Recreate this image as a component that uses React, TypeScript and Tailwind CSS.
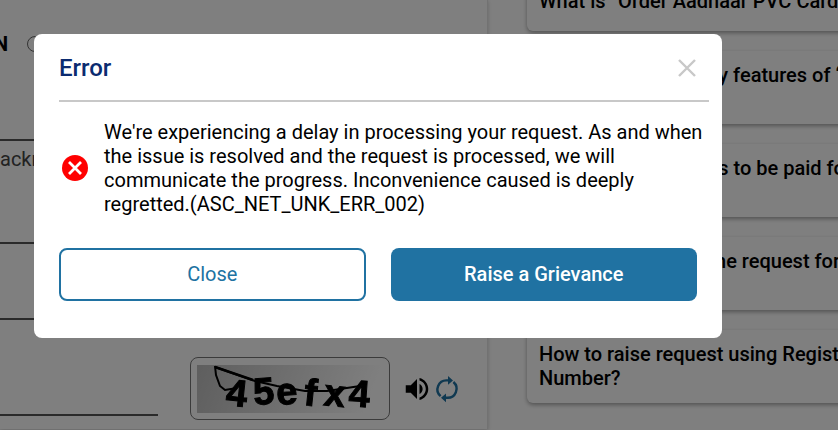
const faqs = [
  "What are the security features of “Aadhaar PVC Card”?",
  "What are the charges to be paid for “Order Aadhaar PVC Card”?",
  "How can one raise the request for “Aadhaar PVC Card”?",
  "How to raise request using Registered Mobile Number?",
];

function FaqList() {
  return (
    <aside className="ml-[39px] flex w-[460px] shrink-0 flex-col gap-5 text-xl leading-6 font-medium text-black">
      <button className="-mt-[11px] rounded-b-md bg-white px-3 pb-[18px] text-left shadow-[0_2px_4px_rgba(0,0,0,0.35)]">
        What is “Order Aadhaar PVC Card” service?
      </button>
      {faqs.map((question) => (
        <button
          key={question}
          className="h-[73px] rounded-md bg-white px-3 pb-0.5 text-left shadow-[0_2px_4px_rgba(0,0,0,0.35)]"
        >
          {question}
        </button>
      ))}
    </aside>
  );
}

function Captcha() {
  return (
    <div className="flex h-[63px] w-[200px] items-center justify-center rounded-lg border border-[#777]">
      <svg width="186" height="48" viewBox="0 0 186 48" role="img" aria-label="Captcha">
        <defs>
          <linearGradient id="shade" x1="0" y1="0" x2="1" y2="0.1">
            <stop offset="0" stopColor="#bdbdbd" />
            <stop offset="0.5" stopColor="#dedede" />
            <stop offset="1" stopColor="#ffffff" />
          </linearGradient>
          <filter id="soft">
            <feGaussianBlur stdDeviation="0.6" />
          </filter>
        </defs>
        <rect width="186" height="48" fill="url(#shade)" />
        <g filter="url(#soft)">
          <text
            x="28 57 80 106 126 151"
            y="40 40 40 40 40 41"
            rotate="6 -4 -4 6 6 4"
            className="font-['Liberation_Sans',sans-serif] text-[38px] font-bold"
            fill="#000"
            stroke="#000"
            strokeWidth="1"
          >
            45efx4
          </text>
          <g fill="none" stroke="#000">
            <path d="M18 1 L19 10 L23 21 L28 25 L40 23" strokeWidth="2" />
            <path d="M18 2 L58 16 L80 21 L108 26 L130 26 L163 21" strokeWidth="2" />
            <path d="M18 2 L56 15" strokeWidth="2.6" />
          </g>
        </g>
      </svg>
    </div>
  );
}

function RequestForm() {
  const field = "block w-full border-b-2 border-[#555] bg-transparent outline-none";
  return (
    <form className="h-[429px] w-[488px] shrink-0 border-r border-[#e4e4e4] bg-white shadow-[0_1px_4px_rgba(0,0,0,0.2)]">
      <div className="flex h-[60px] items-center pt-[27px]">
        <label htmlFor="srn" className="-ml-1.5 w-[33px] text-xl font-bold">
          N
        </label>
        <input
          id="srn"
          type="radio"
          className="h-4 w-4 appearance-none rounded-full border border-[#666]"
        />
      </div>
      <input aria-label="Enrolment number" className={`${field} h-[81px]`} />
      <p className="pt-1.5 text-xl leading-6 text-[#444]">ackn</p>
      <input aria-label="Mobile number" className={`${field} h-[73px]`} />
      <input aria-label="Name" className={`${field} h-[76px]`} />
      <div className="flex pt-[37px]">
        <input
          aria-label="Enter captcha"
          className="h-[59px] w-[158px] border-b-2 border-[#555] bg-transparent outline-none"
        />
        <div className="ml-8 flex items-center">
          <Captcha />
          <button type="button" aria-label="Play captcha" className="ml-3">
            <svg width="30" height="30" viewBox="0 0 24 24" fill="#000">
              <path d="M3 9v6h4l5 5V4L7 9H3zm13.5 3c0-1.77-1.02-3.29-2.5-4.03v8.05c1.48-.73 2.5-2.25 2.5-4.02zM14 3.23v2.06c2.89.86 5 3.54 5 6.71s-2.11 5.85-5 6.71v2.06c4.01-.91 7-4.49 7-8.77s-2.99-7.86-7-8.77z" />
            </svg>
          </button>
          <button type="button" aria-label="Refresh captcha" className="ml-px">
            <svg width="28" height="28" viewBox="0 0 28 28" fill="none" stroke="#2072a2" strokeWidth="2.4">
              <path d="M7.6 21.2A9 9 0 0 1 14 5.4h2M20.4 7A9 9 0 0 1 14 22.8h-2" />
              <path d="M15 1l5 4.4-5 4.4zM13 18.4l-5 4.4 5 4.4z" fill="#2072a2" stroke="none" />
            </svg>
          </button>
        </div>
      </div>
    </form>
  );
}

function ErrorDialog() {
  return (
    <div className="fixed inset-0 flex items-start bg-black/50 pt-[34px] pr-[116px] pl-[34px]">
      <section
        role="dialog"
        aria-modal="true"
        aria-labelledby="dialog-title"
        className="w-full rounded-lg bg-white pt-4 pr-[13px] pb-[37px] pl-[25px]"
      >
        <header className="flex items-center justify-between border-b-2 border-[#c8c8c8] pr-3 pb-3.5">
          <h1 id="dialog-title" className="text-2xl leading-9 font-medium text-[#0b2b70]">
            Error
          </h1>
          <button aria-label="Dismiss">
            <svg width="20" height="20" viewBox="0 0 20 20" stroke="#c8c8c8" strokeWidth="2.4">
              <path d="M2 2l16 16M18 2L2 18" />
            </svg>
          </button>
        </header>
        <div className="flex items-center pt-[18px]">
          <svg className="ml-[3px] shrink-0" width="26" height="26" viewBox="0 0 26 26">
            <circle cx="13" cy="13" r="13" fill="#f00" />
            <path d="M7 7l12 12M19 7l-12 12" stroke="#fff" strokeWidth="2.8" />
          </svg>
          <p className="ml-4 text-xl leading-6 text-black">
            We're experiencing a delay in processing your request. As and when the issue is resolved
            and the request is processed, we will communicate the progress. Inconvenience caused is
            deeply regretted.(ASC_NET_UNK_ERR_002)
          </p>
        </div>
        <div className="grid grid-cols-2 gap-[25px] pt-8 pr-3 text-xl">
          <button className="h-[53px] rounded-lg border-2 border-[#2072a2] bg-white pb-0.5 text-[#2072a2]">
            Close
          </button>
          <button className="h-[53px] rounded-lg bg-[#2072a2] pb-0.5 font-medium text-white">
            Raise a Grievance
          </button>
        </div>
      </section>
    </div>
  );
}

export default function App() {
  return (
    <div className="h-screen overflow-hidden bg-white font-[Roboto,sans-serif]">
      <main className="flex items-start">
        <RequestForm />
        <FaqList />
      </main>
      <ErrorDialog />
    </div>
  );
}
